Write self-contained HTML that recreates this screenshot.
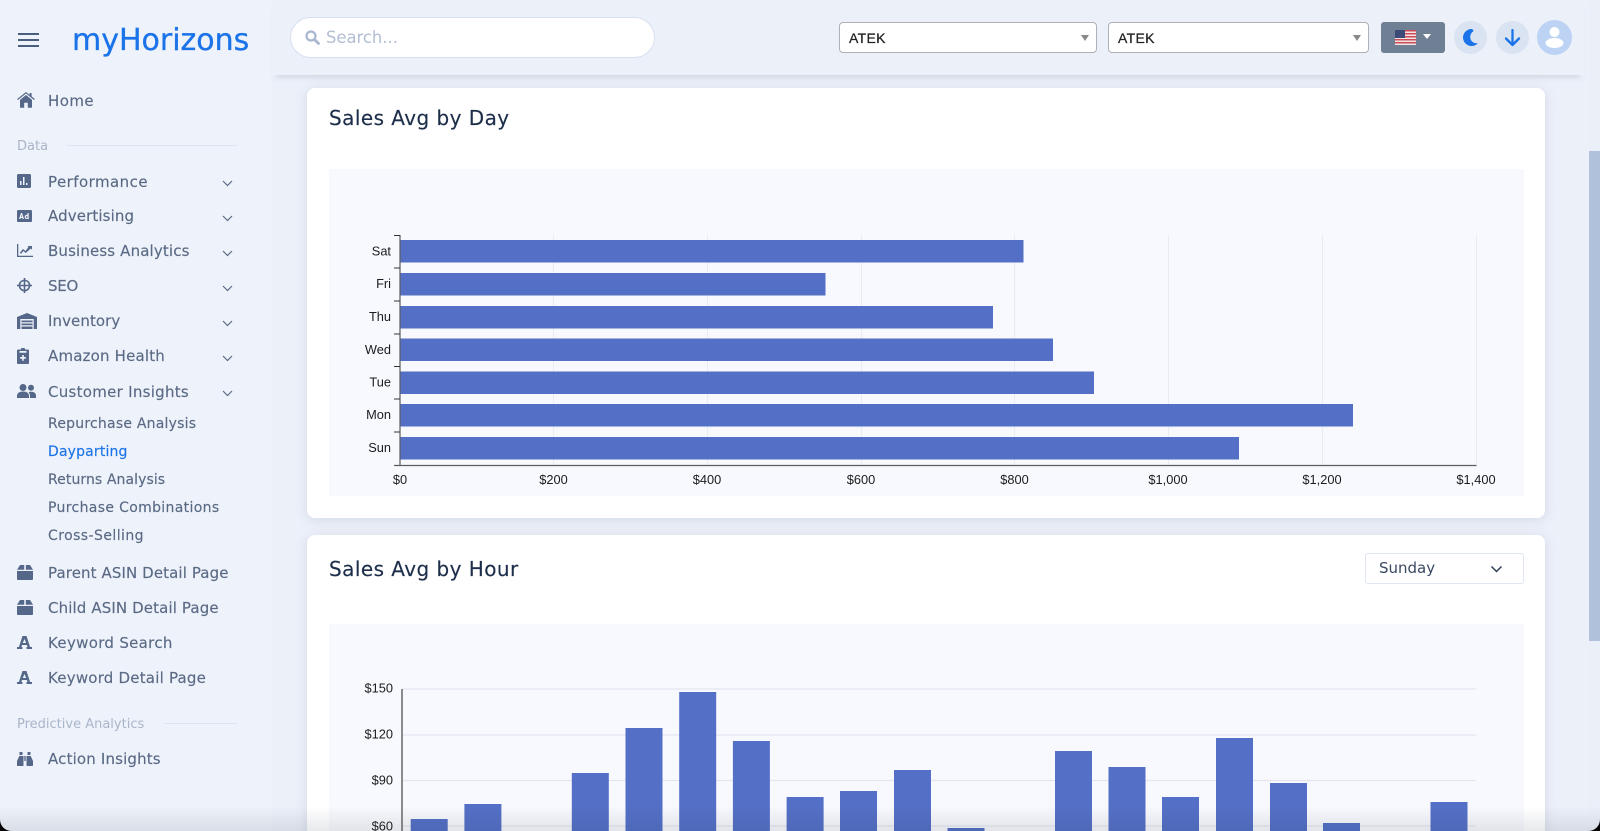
<!DOCTYPE html>
<html lang="en">
<head>
<meta charset="utf-8">
<title>myHorizons - Dayparting</title>
<style>
*{box-sizing:border-box}
html,body{margin:0;padding:0;width:1600px;height:831px;overflow:hidden;background:#edf1f9;font-family:"DejaVu Sans","Liberation Sans",sans-serif}
#app{position:relative;width:1600px;height:831px;overflow:hidden}
.abs,a.n,a.s,.sec,.ic,.chev{position:absolute}
#side{position:absolute;left:0;top:0;width:272px;height:831px;background:#eef2fa}
.logo{position:absolute;left:72px;top:21px;font-size:30px;line-height:40px;color:#1a73e8;-webkit-text-stroke:.3px #1a73e8}
.burger{position:absolute;left:18px;width:21px;height:2px;background:#4a5e7e}
a.n{left:48px;font-size:15px;line-height:20px;color:#5a6a85;white-space:nowrap;text-decoration:none;-webkit-text-stroke:.15px #5a6a85}
a.s{left:48px;font-size:14px;line-height:18px;color:#5a6a85;white-space:nowrap;text-decoration:none;-webkit-text-stroke:.15px #5a6a85}
a.s.on{color:#1a73e8;-webkit-text-stroke:.15px #1a73e8}
.sec{left:17px;font-size:13px;line-height:16px;color:#a9b6ca;white-space:nowrap}
.rule{position:absolute;height:1px;background:#dde3ef;right:35px}
.ic{left:17px;fill:#55688a}
.chev{left:222px;width:11px;height:7px;fill:none;stroke:#5a6a85;stroke-width:1.2}
#main{position:absolute;left:272px;top:0;width:1317px;height:831px;background:#ecf0f9}
#top{position:absolute;left:272px;top:0;width:1312px;height:75px;background:#ecf0f9;box-shadow:0 6px 6px -4px rgba(90,105,140,.22);z-index:3}
#search{position:absolute;left:290px;top:17px;width:365px;height:41px;border-radius:21px;border:1px solid #d6e0f0;background:#fff;z-index:4}
#search span{position:absolute;left:35px;top:9px;font-size:16.400px;line-height:22px;color:#b2bed4}
.sel{position:absolute;top:22px;height:31px;background:#fff;border:1px solid #aeb2b6;border-radius:4px;z-index:4;font:14px/30px "Liberation Sans",sans-serif;color:#222;padding-left:9px;letter-spacing:.3px;-webkit-text-stroke:.25px #222}
.sel i{position:absolute;right:7px;top:12px;width:0;height:0;border:4px solid transparent;border-top:6px solid #888;border-bottom:0}
.flag{position:absolute;left:1381px;top:22px;width:64px;height:31px;background:#6f7f94;border-radius:3px;z-index:4}
.flag i{position:absolute;left:42px;top:12px;width:0;height:0;border:4px solid transparent;border-top:5px solid #fff;border-bottom:0}
.circ{position:absolute;border-radius:50%;z-index:4}
.card{position:absolute;left:307px;width:1238px;background:#fff;border-radius:8px;box-shadow:0 2px 12px rgba(90,105,140,.16)}
.card h2{position:absolute;left:22px;margin:0;font-size:20px;line-height:26px;font-weight:400;color:#1d2e4b;white-space:nowrap;letter-spacing:.45px;-webkit-text-stroke:.15px #1d2e4b}
.panel{position:absolute;left:22px;width:1195px;background:#f8f9fe}
#sun{position:absolute;left:1058px;top:18px;width:159px;height:31px;border:1px solid #dfe6f2;border-radius:3px;font-size:15px;line-height:29px;color:#3a4862;padding-left:13px}
#scroll{position:absolute;left:1589px;top:0;width:11px;height:831px;background:#ebeff8}
#scroll div{position:absolute;left:0;top:151px;width:11px;height:490px;background:#b0c1dc}
#fade{position:absolute;left:0;top:806px;width:1600px;height:25px;background:linear-gradient(rgba(30,40,60,0),rgba(30,40,60,.10));z-index:6;pointer-events:none}
svg text{font-family:"Liberation Sans",sans-serif;font-size:12.800px;fill:#1c1c1c}
</style>
</head>
<body>
<div id="app">
<div id="main"></div>

<div id="side">
  <div class="burger" style="top:33px"></div>
  <div class="burger" style="top:39px"></div>
  <div class="burger" style="top:45px"></div>
  <div class="logo">myHorizons</div>

  <svg class="ic" style="top:92px" width="18" height="16" viewBox="0 0 18 16"><path d="M9 1.500 1 8l-.8-1L9 0l3.600 2.900V1h2v3.400L17.800 7l-.8 1zM9 3l6 4.900V15a.8.8 0 0 1-.8.8h-3.400v-5H7.200v5H3.800A.8.8 0 0 1 3 15V7.900z"/></svg>
  <a class="n" style="top:91px;letter-spacing:.43px">Home</a>

  <div class="sec" style="top:139px">Data</div><div class="rule" style="top:145px;left:67px"></div>

  <svg class="ic" style="top:174px" width="14" height="14" viewBox="0 0 14 14"><path fill-rule="evenodd" d="M1.500 0h11A1.500 1.500 0 0 1 14 1.500v11a1.500 1.500 0 0 1-1.500 1.500h-11A1.500 1.500 0 0 1 0 12.500v-11A1.500 1.500 0 0 1 1.500 0zM3 7v4h1.500V7zm3-4v8h1.500V3zm3 6v2h1.500V9z"/></svg>
  <a class="n" style="top:172px;letter-spacing:.45px">Performance</a>
  <svg class="chev" style="top:180px" viewBox="0 0 11 7"><path d="M1 1l4.500 4.500L10 1"/></svg>

  <svg class="ic" style="top:210px" width="15" height="12" viewBox="0 0 15 12"><path fill-rule="evenodd" d="M1.300 0h12.400A1.300 1.300 0 0 1 15 1.300v9.400a1.300 1.300 0 0 1-1.300 1.300H1.300A1.300 1.300 0 0 1 0 10.700V1.300A1.300 1.300 0 0 1 1.300 0zM4 3 2 9h1.300l.3-1h1.800l.3 1h1.300L5 3zm.5 1.800.5 2H4zM10.500 3v1.900C9 4.500 7.700 5.500 7.700 7c0 1.300 1 2.100 2.100 2 .4 0 .6-.1.900-.3V9h1V3zm-.7 3c.5 0 .7.400.7 1s-.3 1-.7 1-.8-.4-.8-1 .3-1 .8-1z"/></svg>
  <a class="n" style="top:206px;letter-spacing:.12px">Advertising</a>
  <svg class="chev" style="top:215px" viewBox="0 0 11 7"><path d="M1 1l4.500 4.500L10 1"/></svg>

  <svg class="ic" style="top:244px" width="16" height="13" viewBox="0 0 16 13"><path d="M0 0h1.300v11.700H16V13H0z"/><path d="M3 8.500 6 5l2.500 2 3-4-1.200-1H15v3.800l-1.200-1.300L8.800 9 6.300 7 4 10z"/></svg>
  <a class="n" style="top:241px;letter-spacing:.14px">Business Analytics</a>
  <svg class="chev" style="top:250px" viewBox="0 0 11 7"><path d="M1 1l4.500 4.500L10 1"/></svg>

  <svg class="ic" style="top:278px" width="15" height="15" viewBox="0 0 15 15"><path fill-rule="evenodd" d="M6.700 0h1.600v1.600a6 6 0 0 1 5.100 5.100H15v1.600h-1.600a6 6 0 0 1-5.100 5.100V15H6.700v-1.600a6 6 0 0 1-5.100-5.100H0V6.700h1.600a6 6 0 0 1 5.100-5.100zm0 3.300a4.300 4.300 0 0 0-3.400 3.400h3.400zm1.600 0v3.400h3.400a4.300 4.300 0 0 0-3.400-3.400zM3.300 8.300a4.300 4.300 0 0 0 3.400 3.400V8.300zm5 0v3.400a4.300 4.300 0 0 0 3.400-3.400z"/></svg>
  <a class="n" style="top:276px;letter-spacing:-.25px">SEO</a>
  <svg class="chev" style="top:285px" viewBox="0 0 11 7"><path d="M1 1l4.500 4.500L10 1"/></svg>

  <svg class="ic" style="top:313px" width="20" height="16" viewBox="0 0 20 16"><path fill-rule="evenodd" d="M10 0 20 4v12h-3.300V6H3.300v10H0V4zM4.500 7.500h11v1.700h-11zm0 3h11v1.700h-11zm0 3h11V16h-11z"/></svg>
  <a class="n" style="top:311px;letter-spacing:.08px">Inventory</a>
  <svg class="chev" style="top:320px" viewBox="0 0 11 7"><path d="M1 1l4.500 4.500L10 1"/></svg>

  <svg class="ic" style="top:348px" width="12" height="16" viewBox="0 0 12 16"><path fill-rule="evenodd" d="M4 1.500a2 2 0 0 1 4 0h2.700A1.300 1.300 0 0 1 12 2.800v11.900a1.300 1.300 0 0 1-1.300 1.300H1.300A1.300 1.300 0 0 1 0 14.700V2.800a1.300 1.300 0 0 1 1.300-1.300zM2.500 3v1.800h7V3zM5.200 7v2H3.200v1.700h2v2h1.600v-2h2V9h-2V7z"/></svg>
  <a class="n" style="top:346px;letter-spacing:.18px">Amazon Health</a>
  <svg class="chev" style="top:355px" viewBox="0 0 11 7"><path d="M1 1l4.500 4.500L10 1"/></svg>

  <svg class="ic" style="top:384px" width="19" height="14" viewBox="0 0 19 14"><circle cx="6" cy="3.500" r="3.500"/><circle cx="14" cy="3.800" r="3"/><path d="M0 12c0-3 2.500-4.500 6-4.500s6 1.500 6 4.500v2H0zM13 14v-2.200c0-1.500-.6-2.800-1.500-3.600.7-.3 1.500-.5 2.500-.5 3 0 5 1.300 5 4v2.300z"/></svg>
  <a class="n" style="top:382px;letter-spacing:.28px">Customer Insights</a>
  <svg class="chev" style="top:390px" viewBox="0 0 11 7"><path d="M1 1l4.500 4.500L10 1"/></svg>

  <a class="s" style="top:415px;letter-spacing:.22px">Repurchase Analysis</a>
  <a class="s on" style="top:443px;letter-spacing:.16px">Dayparting</a>
  <a class="s" style="top:471px;letter-spacing:.08px">Returns Analysis</a>
  <a class="s" style="top:499px;letter-spacing:.34px">Purchase Combinations</a>
  <a class="s" style="top:527px;letter-spacing:.43px">Cross-Selling</a>

  <svg class="ic" style="top:565px" width="16" height="15" viewBox="0 0 16 15"><path d="M3 0h4.200v4.800H0zM8.800 0H13l3 4.800H8.800zM0 6h16v7.700a1.300 1.300 0 0 1-1.300 1.300H1.300A1.300 1.300 0 0 1 0 13.700z"/></svg>
  <a class="n" style="top:563px;letter-spacing:.1px">Parent ASIN Detail Page</a>
  <svg class="ic" style="top:600px" width="16" height="15" viewBox="0 0 16 15"><path d="M3 0h4.200v4.800H0zM8.800 0H13l3 4.800H8.800zM0 6h16v7.700a1.300 1.300 0 0 1-1.300 1.300H1.300A1.300 1.300 0 0 1 0 13.700z"/></svg>
  <a class="n" style="top:598px;letter-spacing:.12px">Child ASIN Detail Page</a>
  <svg class="ic" style="top:636px" width="15" height="13" viewBox="0 0 15 13"><path fill-rule="evenodd" d="M5.500 0h4l3.600 11H15v2H9.500v-2h1l-.6-2H5l-.6 2h1v2H0v-2h1.900zM7.500 3 5.700 7h3.500z"/></svg>
  <a class="n" style="top:633px;letter-spacing:.31px">Keyword Search</a>
  <svg class="ic" style="top:671px" width="15" height="13" viewBox="0 0 15 13"><path fill-rule="evenodd" d="M5.500 0h4l3.600 11H15v2H9.500v-2h1l-.6-2H5l-.6 2h1v2H0v-2h1.900zM7.500 3 5.700 7h3.500z"/></svg>
  <a class="n" style="top:668px;letter-spacing:.21px">Keyword Detail Page</a>

  <div class="sec" style="top:717px">Predictive Analytics</div><div class="rule" style="top:723px;left:164px"></div>

  <svg class="ic" style="top:752px" width="16" height="14" viewBox="0 0 16 14"><path d="M2.500 0h3v3h-3zM10.500 0h3v3h-3zM2.300 4h4.200v9.500a.5.500 0 0 1-.5.500H.5a.5.500 0 0 1-.5-.5V9zM9.500 4h4.200L16 9v4.500a.5.500 0 0 1-.5.500H10a.5.500 0 0 1-.5-.5zM7.300 4h1.400v5H7.300z"/></svg>
  <a class="n" style="top:749px;letter-spacing:.16px">Action Insights</a>
</div>

<div id="top"></div>
<div id="search">
  <svg style="position:absolute;left:14px;top:12px" width="15" height="15" viewBox="0 0 15 15"><circle cx="6" cy="6" r="4.500" fill="none" stroke="#a8b6cf" stroke-width="2.200"/><path d="M9.500 9.500l4 4" stroke="#a8b6cf" stroke-width="2.800" stroke-linecap="round"/></svg>
  <span>Search...</span>
</div>
<div class="sel" style="left:839px;width:258px">ATEK<i></i></div>
<div class="sel" style="left:1108px;width:261px">ATEK<i></i></div>
<div class="flag">
  <svg style="position:absolute;left:14px;top:8px" width="21" height="15" viewBox="0 0 21 15"><rect width="21" height="15" fill="#f0e4e6"/><g fill="#cc4b55"><rect width="21" height="1.500"/><rect y="3" width="21" height="1.500"/><rect y="6" width="21" height="1.500"/><rect y="9" width="21" height="1.500"/><rect y="12" width="21" height="1.500"/></g><rect width="10" height="8" fill="#3d4a78"/></svg>
  <i></i>
</div>
<div class="circ" style="left:1454px;top:21px;width:33px;height:33px;background:#d9e3f1">
  <svg style="position:absolute;left:9px;top:8px" width="15" height="17" viewBox="0 0 15 17"><path d="M8.500 0C4 0 0 3.800 0 8.500S4 17 8.500 17c2.500 0 4.700-1 6.200-2.800-4 .7-7.500-2.300-7.500-6.200 0-2.500 1.300-4.700 3.400-5.900C10 .7 9.500.1 8.500 0z" fill="#1a73e8"/></svg>
</div>
<div class="circ" style="left:1496px;top:21px;width:33px;height:33px;background:#d9e3f1">
  <svg style="position:absolute;left:8px;top:8px" width="17" height="18" viewBox="0 0 17 18"><path d="M8.500 1v15M2 9.500 8.500 16 15 9.500" fill="none" stroke="#1a73e8" stroke-width="2.300" stroke-linecap="round" stroke-linejoin="round"/></svg>
</div>
<div class="circ" style="left:1537px;top:20px;width:35px;height:35px;background:#bcd3f4">
  <svg style="position:absolute;left:8px;top:6px" width="19" height="22" viewBox="0 0 19 22"><circle cx="9.500" cy="6" r="5" fill="#fff"/><ellipse cx="9.500" cy="17" rx="9" ry="5" fill="#fff"/></svg>
</div>

<div class="card" style="top:88px;height:430px">
  <h2 style="top:17px">Sales Avg by Day</h2>
  <div class="panel" style="top:81px;height:327px"></div>
</div>

<svg class="abs" style="left:307px;top:88px;width:1238px;height:430px" viewBox="307 88 1238 430">
  <g stroke="#e8ebf4" stroke-width="1"><path d="M553.500 235v230M707.500 235v230M861.500 235v230M1014.500 235v230M1168.500 235v230M1322.500 235v230M1476.500 235v230"/></g>
  <g fill="#5470c6">
    <rect x="400" y="240" width="623.500" height="22.500"/>
    <rect x="400" y="273" width="425.500" height="22.500"/>
    <rect x="400" y="306" width="593" height="22.500"/>
    <rect x="400" y="338.500" width="653" height="22.500"/>
    <rect x="400" y="371.500" width="694" height="22.500"/>
    <rect x="400" y="404" width="953" height="22.500"/>
    <rect x="400" y="437" width="839" height="22.500"/>
  </g>
  <path d="M400 235v230.500M394 465.500h1082.500" stroke="#5c5c5c" stroke-width="1.200" fill="none"/>
  <path d="M394 235.500h6M394 268h6M394 301h6M394 334h6M394 366.500h6M394 399h6M394 432h6" stroke="#333" fill="none"/>
  <g text-anchor="end">
    <text x="391" y="255.500">Sat</text><text x="391" y="288">Fri</text><text x="391" y="321">Thu</text><text x="391" y="354">Wed</text><text x="391" y="386.500">Tue</text><text x="391" y="419">Mon</text><text x="391" y="452">Sun</text>
  </g>
  <g text-anchor="middle">
    <text x="400" y="484">$0</text><text x="553.500" y="484">$200</text><text x="707" y="484">$400</text><text x="861" y="484">$600</text><text x="1014.500" y="484">$800</text><text x="1168" y="484">$1,000</text><text x="1322" y="484">$1,200</text><text x="1476" y="484">$1,400</text>
  </g>
</svg>

<div class="card" style="top:535px;height:320px">
  <h2 style="top:21px">Sales Avg by Hour</h2>
  <div id="sun">Sunday
    <svg style="position:absolute;left:124px;top:11px" width="13" height="8" viewBox="0 0 13 8"><path d="M1.500 1.500l5 5 5-5" fill="none" stroke="#2f3d58" stroke-width="1.500"/></svg>
  </div>
  <div class="panel" style="top:89px;height:232px"></div>
</div>

<svg class="abs" style="left:307px;top:623px;width:1238px;height:208px" viewBox="307 623 1238 208">
  <path d="M402 689h1074M402 735h1074M402 780.500h1074M402 826h1074" stroke="#e3e6f1" stroke-width="1.200" fill="none"/>
  <g fill="#5470c6">
    <rect x="410.700" y="819" width="37" height="13"/>
    <rect x="464.400" y="804" width="37" height="28"/>
    <rect x="571.800" y="773" width="37" height="59"/>
    <rect x="625.500" y="728" width="37" height="104"/>
    <rect x="679.200" y="692" width="37" height="140"/>
    <rect x="732.900" y="741" width="37" height="91"/>
    <rect x="786.600" y="797" width="37" height="35"/>
    <rect x="840" y="791" width="37" height="41"/>
    <rect x="894" y="770" width="37" height="62"/>
    <rect x="947.500" y="828" width="37" height="4"/>
    <rect x="1055" y="751" width="37" height="81"/>
    <rect x="1108.500" y="767" width="37" height="65"/>
    <rect x="1162" y="797" width="37" height="35"/>
    <rect x="1216" y="738" width="37" height="94"/>
    <rect x="1270" y="783" width="37" height="49"/>
    <rect x="1323" y="823" width="37" height="9"/>
    <rect x="1430.500" y="802" width="37" height="30"/>
  </g>
  <path d="M402 689v142" stroke="#444" stroke-width="1.200"/>
  <g text-anchor="end">
    <text x="393" y="692.500">$150</text><text x="393" y="738.500">$120</text><text x="393" y="784.500">$90</text><text x="393" y="830.500">$60</text>
  </g>
</svg>

<div id="scroll"><div></div></div>
<div id="fade"></div>
<svg class="abs" style="left:0;top:819px;z-index:7" width="12" height="12" viewBox="0 0 12 12"><path d="M0 0v12h12C5 12 0 7 0 0z" fill="#000"/></svg>
<svg class="abs" style="left:1588px;top:819px;z-index:7" width="12" height="12" viewBox="0 0 12 12"><path d="M12 0v12H0c7 0 12-5 12-12z" fill="#000"/></svg>
</div>
</body>
</html>
